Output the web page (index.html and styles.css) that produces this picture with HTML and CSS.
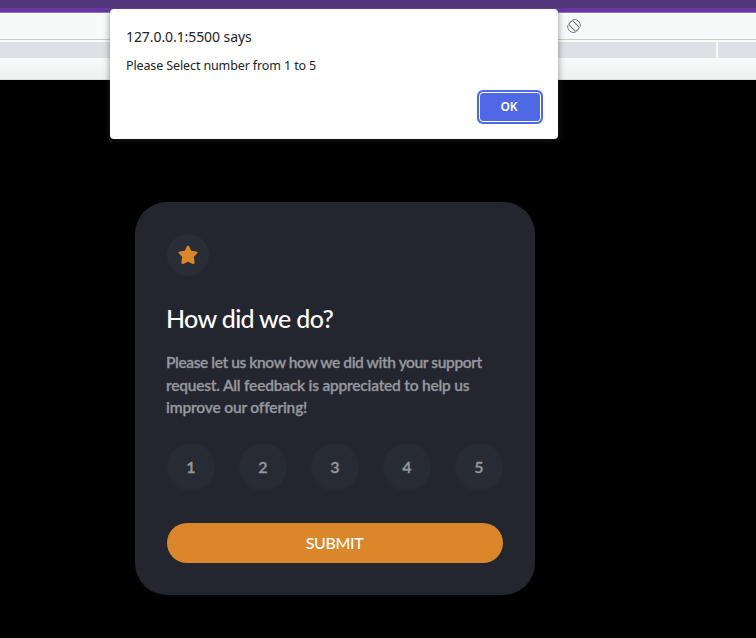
FILE: index.html
```html
<!DOCTYPE html>
<html lang="en">
<head>
<meta charset="utf-8">
<title>Interactive rating</title>
<link rel="stylesheet" href="styles.css">
</head>
<body>
<header class="browser">
  <div class="frame"></div>
  <div class="toolbar">
    <svg class="rotate" viewBox="0 0 14 14" fill="none" stroke="#747776" stroke-width="1">
      <rect x="4.2" y="1.8" width="5.6" height="10.4" rx="1.2" transform="rotate(-45 7 7)"/>
      <path d="M5.5.8C9.6-.5 13.8 2.8 13.4 7.6M8.5 13.2C4.4 14.5.2 11.2.6 6.4"/>
    </svg>
  </div>
  <div class="breakpoints"><div class="range"></div><div class="rest"></div></div>
  <div class="ruler"></div>
</header>
<main class="page">
  <section class="card">
    <div class="star">
      <svg viewBox="0 0 20 20"><path d="M9 1.1Q10 0 11 1.1L13.2 5.8 18.4 6.4Q20.2 7 19.2 8.3L15.8 12 16.7 17.6Q16.5 19.5 14.8 18.9L10 16.8 5.2 18.9Q3.5 19.5 3.3 17.6L4.2 12 .8 8.3Q-.2 7 1.6 6.4L6.8 5.8Z"/></svg>
    </div>
    <h1>How did we do?</h1>
    <p class="copy"><span class="first">Please let us know how we did with your support</span> <span class="second">request. All feedback is appreciated to help us</span> <span class="third">improve our offering!</span></p>
    <div class="scores">
      <button>1</button><button>2</button><button>3</button><button>4</button><button>5</button>
    </div>
    <button class="submit"><span>SUBMIT</span></button>
  </section>
</main>
<div class="dialog" role="alertdialog">
  <h2><span>127.0.0.1:5500 says</span></h2>
  <p><span>Please Select number from 1 to 5</span></p>
  <button class="ok">OK</button>
</div>
</body>
</html>
```
FILE: styles.css
```css
* { box-sizing: border-box; }
body { margin: 0; height: 638px; overflow: hidden; background: #000; font-family: Lato, sans-serif; }
button { border: 0; padding: 0; font-family: inherit; }
h1, h2, p { margin: 0; }
.browser { height: 80px; background: #f8faf9; }
.frame { height: 13px; background: #52347b; border-bottom: 1px solid #9170bd; box-shadow: inset 0 -4px #6937a0; }
.toolbar { height: 27px; border-bottom: 1px solid #c9cccb; padding: 6px 0 0 567px; }
.rotate { display: block; width: 14px; height: 14px; }
.breakpoints { display: flex; gap: 2px; height: 18px; padding-top: 2px; }
.range { width: 716px; height: 16px; background: #dfe0e5; }
.rest { flex: 1; height: 16px; background: #dfe0e5; }
.ruler { height: 22px; background: linear-gradient(#f8faf9, #eff1f0); border-bottom: 1px solid #dfe1e0; }
.page { padding: 122px 0 0 135px; }
.card { width: 400px; height: 393px; padding: 32px; border-radius: 32px; background: #23252f; }
.star { display: grid; place-items: center; width: 42px; height: 42px; border-radius: 50%; background: #292d36; }
.star svg { width: 20px; height: 20px; fill: #da862a; }
h1 { margin: 24px 0 0 -1px; color: #fff; font-size: 25px; line-height: 36px; font-weight: 500; letter-spacing: -.65px; white-space: nowrap; }
.copy { margin: 15px 0 0 -1px; color: #96979c; font-size: 15.5px; line-height: 22.5px; font-weight: 600; -webkit-text-stroke: .3px #96979c; }
.copy span { display: block; width: max-content; }
.first { letter-spacing: -.39px; }
.second { letter-spacing: -.21px; }
.third { letter-spacing: -.16px; }
.scores { display: flex; justify-content: space-between; width: 336px; margin-top: 24.5px; }
.scores button { width: 48px; height: 48px; padding-bottom: 2px; border-radius: 50%; background: #272b34; color: #96979c; font-size: 16px; font-weight: 600; -webkit-text-stroke: .3px #96979c; }
.submit { display: block; width: 336px; height: 40px; margin-top: 32px; padding: 0 1px 2px 0; border-radius: 20px; background: #da862a; color: #fff; font-size: 16px; font-weight: 500; letter-spacing: -.35px; }
.dialog { position: absolute; left: 110px; top: 9px; width: 448px; height: 130px; padding: 17px 16px; border-radius: 4px; background: #fff; color: #222326; box-shadow: 0 2px 6px #0005, 0 1px 7px #8884; font-family: "Noto Sans", sans-serif; }
.dialog h2 { font-size: 14px; line-height: 22px; font-weight: 400; letter-spacing: -.08px; }
.dialog p { margin-top: 9px; font-size: 12.5px; line-height: 18px; letter-spacing: -.12px; }
.ok { display: block; width: 62px; height: 30px; margin: 17px 1px 0 auto; padding: 0 2px 2px 0; border: 1px solid #fff; border-radius: 4px; background: #4f68e6; box-shadow: 0 0 0 2px #4f68e6; color: #fff; font-size: 12px; font-weight: 600; }
```
